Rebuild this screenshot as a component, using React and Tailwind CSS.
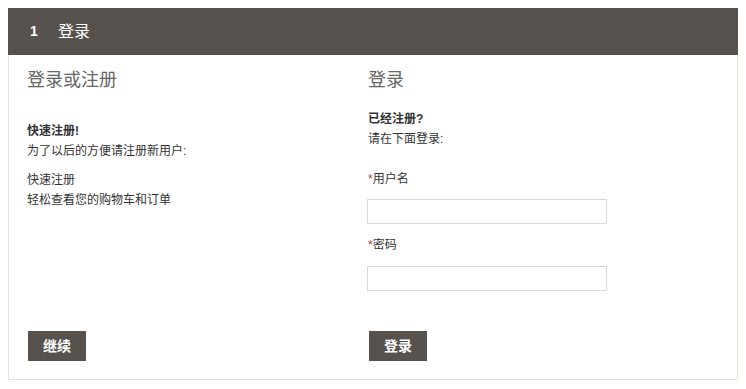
import React from 'react';

const font = { fontFamily: '"Liberation Sans", "Noto Sans CJK SC", sans-serif' };

function App() {
  return (
    <div className="p-2 bg-white min-h-screen text-[12px] text-[#333]" style={font}>
      <div className="w-[730px]">
        {/* cabecera del paso */}
        <div className="h-[47px] bg-[#57524d] flex items-center text-white">
          <span className="ml-[22px] w-[28px] text-[14px] font-bold">1</span>
          <span className="text-[16px]">登录</span>
        </div>

        <div className="border border-t-0 border-[#e8e0d5] h-[325px] flex">
          {/* nuevo cliente */}
          <div className="w-[341px] ml-[18px] flex flex-col">
            <h2 className="mt-[10px] text-[18px] text-[#666] leading-[30px]">登录或注册</h2>
            <p className="mt-[26px] font-bold leading-[20px]">快速注册!</p>
            <p className="leading-[20px]">为了以后的方便请注册新用户:</p>
            <p className="mt-[9px] leading-[20px]">快速注册<br />轻松查看您的购物车和订单</p>
            <div className="mt-auto mb-[18px]">
              <button className="ml-[1px] w-[58px] h-[30px] bg-[#57524d] text-white text-[14px] font-bold">继续</button>
            </div>
          </div>

          {/* cliente registrado */}
          <div className="w-[360px] flex flex-col">
            <h2 className="mt-[10px] text-[18px] text-[#666] leading-[30px]">登录</h2>
            <p className="mt-[14px] font-bold leading-[20px]">已经注册?</p>
            <p className="leading-[20px]">请在下面登录:</p>
            <label className="mt-[20px] leading-[20px]"><span className="text-[#a44]">*</span>用户名</label>
            <input className="mt-[10px] -ml-[1px] w-[240px] h-[25px] border border-[#d9d9d9] outline-none" />
            <label className="mt-[11px] leading-[20px]"><span className="text-[#a44]">*</span>密码</label>
            <input className="mt-[11px] -ml-[1px] w-[240px] h-[25px] border border-[#d9d9d9] outline-none" />
            <div className="mt-auto mb-[18px]">
              <button className="ml-[1px] w-[58px] h-[30px] bg-[#57524d] text-white text-[14px] font-bold">登录</button>
            </div>
          </div>
        </div>
      </div>
    </div>
  );
}

export default App;
